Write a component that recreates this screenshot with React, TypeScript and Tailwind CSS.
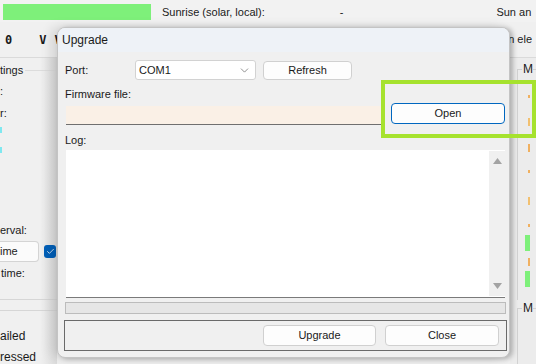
import { ChevronDown, Check } from "lucide-react"

const font = "font-['Liberation_Sans',Arial,sans-serif]"

type BtnProps = {
    label: string
    className?: string
}

const WinButton = ({label, className}: BtnProps) => (
    <div className={`flex items-center justify-center bg-[#fdfdfd] border border-[#d0d0d0] rounded-[4px] text-[11px] text-[#1a1a1a] ${className ?? ""}`}>
        {label}
    </div>
)

type MarkProps = {
    top: string
    h: string
    color?: string
}

// little coloured ticks peeking out from behind the dialog
const Mark = ({top, h, color = "bg-[#f0b060]"}: MarkProps) => (
    <div className={`ml-[10px] w-[2px] ${top} ${h} ${color}`}/>
)

const UpgradeDialog = () => {
    return (
        <div className="absolute left-[57px] top-[27px] w-[453px] h-[331px] flex flex-col rounded-[8px] border border-[#c4c4c4] bg-[#f0f0f0] overflow-hidden shadow-[-6px_0_12px_rgba(0,0,0,0.12),3px_1px_5px_rgba(0,0,0,0.25)]">
            {/* title bar */}
            <div className="h-[24px] bg-[#eef2f7] flex items-center pl-[4px] text-[12px] text-[#1a1a1a]">Upgrade</div>

            <div className="flex flex-col pl-[7px] pr-[4px] text-[11px] text-[#1a1a1a]">
                {/* port row */}
                <div className="flex items-center mt-[8px] h-[20px]">
                    <span className="w-[70px]">Port:</span>
                    <div className="w-[121px] h-[20px] flex items-center justify-between bg-white border border-[#d2d2d2] rounded-[3px] pl-[3px] pr-[4px]">
                        <span>COM1</span>
                        <ChevronDown size={13} strokeWidth={1.2} className="text-[#555]"/>
                    </div>
                    <WinButton label="Refresh" className="ml-[7px] w-[89px] h-[19px]"/>
                </div>

                <div className="mt-[7px] h-[14px] leading-[14px]">Firmware file:</div>

                {/* file row */}
                <div className="flex items-end h-[23px] mt-[1px]">
                    <div className="w-[317px] h-[19px] ml-[1px] bg-[#faf0e6] border-b border-[#6f6f6f]"/>
                    <div className="ml-[8px] w-[114px] h-[21px] mb-[1px] flex items-center justify-center bg-[#fdfdfd] border border-[#0067c0] rounded-[4px] text-[11px]">Open</div>
                </div>

                <div className="mt-[8px] h-[14px] leading-[14px]">Log:</div>

                {/* log area */}
                <div className="mt-[3px] ml-[1px] w-[439px] h-[148px] flex bg-white border-b border-[#7a7a7a]">
                    <div className="flex-1"/>
                    <div className="w-[16px] my-[1px] bg-[#f0f0f0] flex flex-col items-center justify-between py-[7px]">
                        <svg width="9" height="6" viewBox="0 0 9 6"><path d="M0 6 L4.5 0 L9 6 Z" fill="#a3a3a3"/></svg>
                        <svg width="9" height="6" viewBox="0 0 9 6"><path d="M0 0 L4.5 6 L9 0 Z" fill="#a3a3a3"/></svg>
                    </div>
                </div>

                {/* progress */}
                <div className="mt-[4px] w-[441px] h-[12px] bg-[#e6e6e6] border border-[#bcbcbc]"/>

                {/* bottom group */}
                <div className="mt-[6px] -ml-[1px] w-[443px] h-[31px] border border-[#6a6a6a] flex items-center justify-end pr-[7px] gap-[9px]">
                    <WinButton label="Upgrade" className="w-[113px] h-[21px]"/>
                    <WinButton label="Close" className="w-[114px] h-[21px]"/>
                </div>
            </div>
        </div>
    )
}

const App = () => {
    return (
        <div className={`relative w-[536px] h-[364px] overflow-hidden bg-[#f0f0f0] ${font} text-[11px] text-[#1a1a1a]`}>
            {/* background window */}
            <div className="flex flex-col h-full">
                <div className="h-[22px] flex items-start pt-[4px] bg-[#f2f2f2] whitespace-nowrap">
                    <div className="shrink-0 ml-[3px] w-[148px] h-[16px] bg-[#7ef07a]"/>
                    <span className="shrink-0 ml-[11px] leading-[16px]">Sunrise (solar, local):</span>
                    <span className="shrink-0 ml-[75px] leading-[16px]">-</span>
                    <span className="shrink-0 ml-[153px] leading-[16px]">Sun an</span>
                </div>
                <div className="h-[36px] flex items-center font-['DejaVu_Sans_Mono',monospace] font-bold text-[12px] border-b border-[#dadada] whitespace-nowrap">
                    <span className="shrink-0 ml-[5px]">0</span>
                    <span className="shrink-0 ml-[27px]">V</span>
                    <span className="shrink-0 ml-[8px]">V</span>
                    <span className={`shrink-0 ml-auto mr-[4px] ${font} font-normal text-[11px]`}>n ele</span>
                </div>

                <div className="flex flex-1">
                    {/* left fragment */}
                    <div className="w-[57px] shrink-0 flex flex-col bg-gradient-to-r from-[#f0f0f0] from-70% to-[#dcdcdc]">
                        <div className="flex items-center mt-[5px] h-[14px]">
                            <span className="leading-[14px]">tings</span>
                            <div className="flex-1 ml-[2px] h-px bg-[#dcdcdc]"/>
                        </div>
                        <div className="mt-[7px] leading-[14px]">:</div>
                        <div className="mt-[8px] leading-[14px]">r:</div>
                        <div className="mt-[7px] w-[2px] h-[6px] bg-[#7fe8f0]"/>
                        <div className="mt-[14px] w-[2px] h-[6px] bg-[#7fe8f0]"/>
                        <div className="mt-[70px] leading-[14px]">erval:</div>
                        <div className="mt-[4px] flex items-center">
                            <div className="w-[39px] h-[21px] bg-[#fbfbfb] border border-[#d4d4d4] border-l-0 rounded-r-[4px] flex items-center">ime</div>
                            <div className="ml-[5px] w-[12px] h-[13px] rounded-[3px] bg-[#005fb8] flex items-center justify-center">
                                <Check size={9} strokeWidth={2} className="text-white"/>
                            </div>
                        </div>
                        <div className="mt-[4px] leading-[14px] pl-[1px]">time:</div>
                        <div className="mt-[19px] h-px bg-[#d6d6d6]"/>
                        <div className="mt-[10px] h-px bg-[#d6d6d6]"/>
                        <div className="mt-[18px] leading-[14px] text-[12px]">ailed</div>
                        <div className="mt-[7px] leading-[14px] text-[12px]">ressed</div>
                    </div>

                    <div className="flex-1"/>

                    {/* right fragment */}
                    <div className="w-[26px] shrink-0 flex flex-col pl-[7px] bg-[#ececec]">
                        <div className="mt-[11px] h-[231px] border-l border-t border-[#d2d2d2] relative flex flex-col">
                            <span className="absolute -top-[8px] left-[4px] bg-[#ececec] pl-[1px] text-[12px] leading-[14px]">M</span>
                            <Mark top="mt-[25px]" h="h-[3px]"/>
                            <Mark top="mt-[20px]" h="h-[8px]" color="bg-[#f2c070]"/>
                            <Mark top="mt-[18px]" h="h-[8px]"/>
                            <Mark top="mt-[18px]" h="h-[3px]"/>
                            <Mark top="mt-[24px]" h="h-[8px]" color="bg-[#f2c070]"/>
                            <Mark top="mt-[19px]" h="h-[3px]"/>
                            <div className="mt-[8px] ml-[7px] w-[5px] h-[16px] bg-[#7ef07a]"/>
                            <Mark top="mt-[7px]" h="h-[8px]"/>
                            <div className="mt-[5px] ml-[7px] w-[5px] h-[16px] bg-[#7ef07a]"/>
                        </div>
                        <div className="mt-[8px] flex-1 border-l border-t border-[#d2d2d2] relative">
                            <span className="absolute -top-[8px] left-[4px] bg-[#ececec] pl-[1px] text-[12px] leading-[14px]">M</span>
                        </div>
                    </div>
                </div>
            </div>

            <UpgradeDialog/>

            {/* highlight annotation */}
            <div className="absolute left-[381px] top-[80px] w-[155px] h-[58px] border-[4px] border-[#a6e22e]"/>
        </div>
    )
}

export default App
